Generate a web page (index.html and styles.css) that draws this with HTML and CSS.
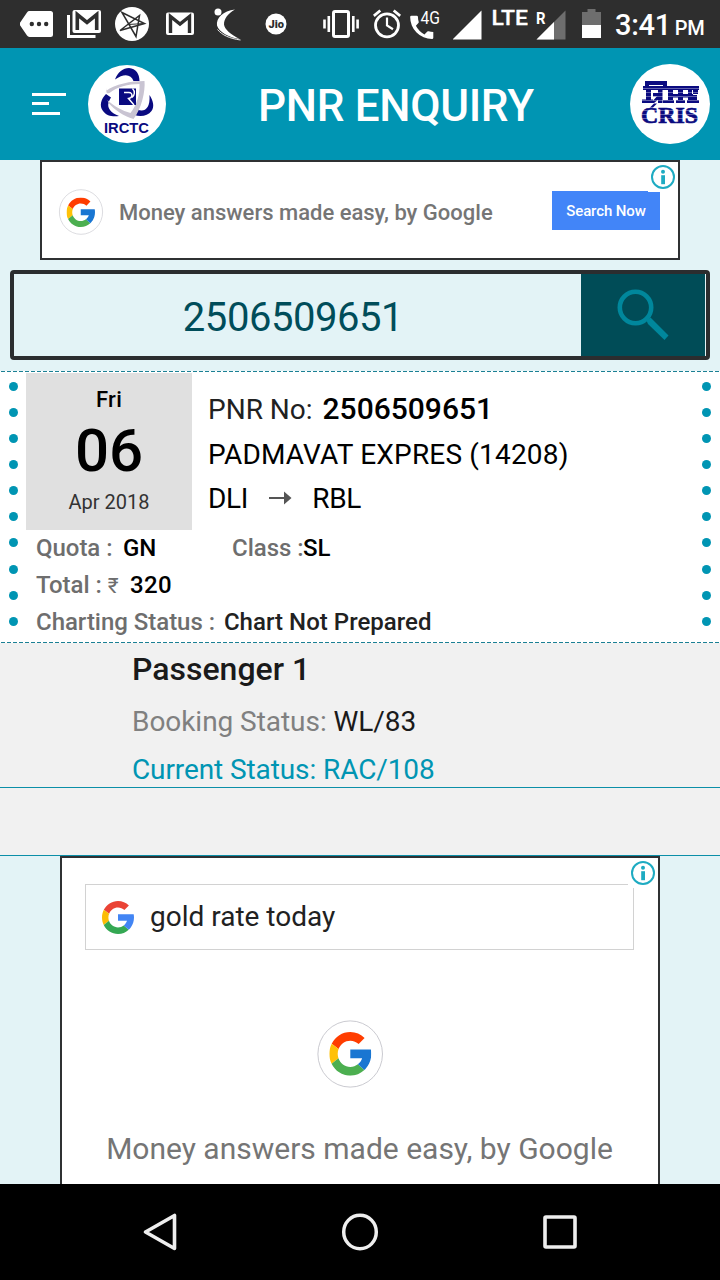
FILE: index.html
```html
<!DOCTYPE html>
<html lang="en">
<head>
<meta charset="utf-8">
<title>PNR Enquiry</title>
<link rel="stylesheet" href="styles.css">
</head>
<body>
<svg width="0" height="0" class="defs" aria-hidden="true">
  <symbol id="info" viewBox="0 0 24 24">
    <circle cx="12" cy="12" r="11" fill="#fff" stroke="#1eabc2" stroke-width="2"/>
    <circle cx="12" cy="6.8" r="2" fill="#1eabc2"/>
    <path d="M10.2 10.2h3.8v9h-3.8z" fill="#1eabc2"/>
  </symbol>
  <symbol id="g" viewBox="4 4 40 40" preserveAspectRatio="none">
    <path class="g-r" d="M6.306 14.691l6.571 4.819C14.655 15.108 18.961 12 24 12c3.059 0 5.842 1.154 7.961 3.039l5.657-5.657C34.046 6.053 29.268 4 24 4 16.318 4 9.656 8.337 6.306 14.691z"/>
    <path class="g-y" d="M6.306 14.691l6.571 4.819C12.3 20.9 12 22.4 12 24c0 1.4.25 2.8.717 4.054l-6.522 5.025C4.8 30.4 4 27.3 4 24c0-3.4.84-6.5 2.306-9.309z"/>
    <path class="g-g" d="M24 44c5.166 0 9.86-1.977 13.409-5.192l-6.19-5.238C29.211 35.091 26.715 36 24 36c-5.202 0-9.619-3.317-11.283-7.946l-6.522 5.025C9.505 39.556 16.227 44 24 44z"/>
    <path class="g-b" d="M43.611 20H24v8h11.303c-.792 2.237-2.231 4.166-4.087 5.571l6.193 5.237C36.971 39.205 44 34 44 24c0-1.341-.138-2.65-.389-4z"/>
  </symbol>
</svg>

<div class="status">
  <svg class="s-more" width="33" height="48" viewBox="20 0 33 48"><path d="M29.500 11H50.500a2.500 2.500 0 0 1 2.500 2.500v21a2.500 2.500 0 0 1-2.500 2.500H29.500a3 3 0 0 1-2.500-1.400L20 25.200v-2.400L27 12.400a3 3 0 0 1 2.500-1.400z" fill="#fff"/><g fill="#2e2e2e"><circle cx="31.800" cy="24" r="2.200"/><circle cx="39" cy="24" r="2.200"/><circle cx="46.200" cy="24" r="2.200"/></g></svg>
  <svg class="s-mails" width="35" height="48" viewBox="67 0 35 48"><rect x="72.500" y="10" width="28.500" height="23" rx="2" fill="#fff"/><path d="M77.300 30V14.500l9.700 8 9.700-8V30" fill="none" stroke="#2e2e2e" stroke-width="3.600"/><path d="M68.500 15v21.500H95.500" fill="none" stroke="#fff" stroke-width="3"/></svg>
  <svg class="s-star" width="34" height="48" viewBox="115 0 34 48"><circle cx="132" cy="24" r="17" fill="#fff"/><path d="M122 12.500L144.500 23.500 120 30.500 139.500 15.500 136 36.500z" fill="none" stroke="#2e2e2e" stroke-width="1.500"/><path d="M144.500 23.500L128 24.500" stroke="#2e2e2e"/></svg>
  <svg class="s-mail" width="28" height="48" viewBox="166 0 28 48"><rect x="166" y="12.500" width="28" height="22.500" rx="2" fill="#fff"/><path d="M170.500 33V16.500l9.500 7.500 9.500-7.500V33" fill="none" stroke="#2e2e2e" stroke-width="3.400"/></svg>
  <svg class="s-swirl" width="28" height="48" viewBox="214 0 28 48"><circle cx="218" cy="12" r="3.500" fill="#fff"/><path d="M235 9.500C223 11 216 18 217 25.500 219 32 229 37.500 239.500 39 231 34.500 224.500 29.500 224 24.500 224 18.500 228 13.500 235 9.500z" fill="#fff"/><path d="M217.500 29.500c4.500 5.500 12 9 23 10.500" fill="none" stroke="#fff" stroke-width=".9"/></svg>
  <svg class="s-jio" width="22" height="48" viewBox="265 0 22 48"><circle cx="276" cy="24" r="10.500" fill="#fff"/><text x="268.500" y="27.500" font-size="10.500" font-weight="900" fill="#2e2e2e" textLength="15.500" lengthAdjust="spacingAndGlyphs">Jio</text></svg>
  <svg class="s-vib" width="37" height="48" viewBox="323 0 37 48"><rect x="333.500" y="11.500" width="15" height="25" rx="1.500" fill="none" stroke="#fff" stroke-width="3"/><path d="M324.500 19.500v9M328.800 16v16M353.300 16v16M357.600 19.500v9" stroke="#fff" stroke-width="2.600"/></svg>
  <svg class="s-alarm" width="28" height="48" viewBox="373 0 28 48"><circle cx="387" cy="25.300" r="11.500" fill="none" stroke="#fff" stroke-width="2.800"/><path d="M387 17.500v8l6 3.700" fill="none" stroke="#fff" stroke-width="2.200"/><path d="M373.800 15.800l6.500-5.300M400.200 15.800l-6.500-5.300" stroke="#fff" stroke-width="2.800"/></svg>
  <svg class="s-call" width="31" height="48" viewBox="410 0 31 48"><path transform="translate(407.300 11.800) scale(1.300)" d="M6.620 10.790a15 15 0 0 0 6.590 6.590l2.200-2.200a1 1 0 0 1 1.020-.24c1.100.37 2.300.57 3.570.57v0V20a1 1 0 0 1-1 1A17 17 0 0 1 2.200 4a1 1 0 0 1 1-1H7.200a1 1 0 0 1 1 1c0 1.250.2 2.450.57 3.570a1 1 0 0 1-.25 1.020z" fill="#fff"/><text x="420.500" y="24" font-size="17.500" fill="#fff" textLength="19.500" lengthAdjust="spacingAndGlyphs">4G</text></svg>
  <svg class="s-sig" width="29" height="48" viewBox="453 0 29 48"><path d="M452.500 39.500H481.500V10.500z" fill="#fff"/></svg>
  <svg class="s-lte" width="36" height="48" viewBox="492 0 36 48"><text x="491.500" y="25" font-size="21" font-weight="500" fill="#fff" stroke="#fff" stroke-width=".3" textLength="36.500" lengthAdjust="spacingAndGlyphs">LTE</text></svg>
  <svg class="s-sig2" width="30" height="48" viewBox="536 0 30 48"><path d="M536.500 39.500H565.500V10.500z" fill="#6e6e6e"/><path d="M536.500 39.500H554V22z" fill="#fff"/><text x="536" y="23.500" font-size="16" font-weight="700" fill="#fff" textLength="9.500" lengthAdjust="spacingAndGlyphs">R</text></svg>
  <svg class="s-bat" width="20" height="48" viewBox="582 0 20 48"><path d="M582 12h5.500V9h8v3H601v14h-19z" fill="#6e6e6e"/><path d="M582 25h19v13h-19z" fill="#fff"/></svg>
  <div class="clock">3:41 <span class="pm">PM</span></div>
</div>

<header class="bar">
  <svg class="menu" width="36" height="24" viewBox="0 0 36 24"><path d="M0 2.500h34M0 11.500h17M0 21.500h28" stroke="#fff" stroke-width="3"/></svg>
  <svg class="irctc" width="78" height="78" viewBox="88 65 78 78">
    <circle cx="127" cy="104" r="39" fill="#fff"/>
    <g fill="#0a0a80"><path d="M115 79.500C118 72 123 68 129 68c7 .5 10.500 6 10.500 13h-6C131 74 124 73 115 79.500z"/><path d="M106 94c-5 5-7 12-3 17 3.500 5 10 6 16 5-8-3-12-8-10.500-13 .5-2 1.500-4 2.500-5.500z"/><path d="M149.500 95c4 6 5 12 2 16-3.500 5-11 6-17 4l3-5.500c6 2.500 13 .5 12-14.500z"/></g>
    <path d="M106 91c9-7 25-10 38.500-10 1 10-3 28-11 38-10-3-19-9-25-16l-1-3c6 6 15 11 23 13 6-8 9.500-18 9-29-11 0-23 3-30 9-3 1-3 0-3.500-5z" fill="#c9c4d2"/>
    <rect x="119" y="88.500" width="17" height="16.500" fill="#0a0a80"/><path d="M124 92.500h5c4 0 4 5.500-.5 6l5.500 6.500M132.500 88.500c3 3 2 7-.5 9" fill="none" stroke="#fff" stroke-width="1.400"/>
    <text x="104" y="133" class="arial" font-size="14.500" font-weight="700" fill="#0a0a80" textLength="45" lengthAdjust="spacingAndGlyphs">IRCTC</text>
  </svg>
  <h1>PNR ENQUIRY</h1>
  <svg class="cris" width="80" height="80" viewBox="630 64 80 80">
    <circle cx="670" cy="104" r="40" fill="#fff"/>
    <g fill="#0a0a80"><path d="M645 81h22v6h-4v-2h-14v2h-4z"/><path d="M643 86h56v4h-56z"/><path d="M646 89h5v13h-5zM653 93h9v3.500h-9zM658 89h4.500v14H658zM668 89h5v14h-5zM672 94h8v3.500h-8zM678 89h5v14h-5zM682 94h8v3.500h-8zM688 89h5v14h-5zM692 94h6v-4h-6zM692 95h5v8h-5z"/><path d="M642 99.500h11v3.500h-11zM663 100h11v3h-11zM676 100h9v3h-9zM687 100h12v3h-12z"/><path d="M651 103l8-9v5l-5 4zM650 107.500l4-4h3l-4 4z"/></g>
    <text x="641" y="123" class="serif" font-size="23" font-weight="700" fill="#0a0a80" stroke="#0a0a80" stroke-width=".7" textLength="57" lengthAdjust="spacingAndGlyphs">CRIS</text>
    <path d="M640 88.500h60M640 92.500h60M640 96.500h60M640 100.500h60M640 110.500h60M640 114.500h60M640 118.500h60" stroke="#fff" stroke-width=".7" opacity=".5"/>
  </svg>
</header>

<main class="content">
  <section class="ad-top">
    <svg class="g-pale" width="46" height="46" viewBox="58 189.500 46 46"><ellipse cx="81" cy="212.500" rx="21.600" ry="22.300" fill="#fff" stroke="#d3d3d8" stroke-width=".8"/><use href="#g" x="66.500" y="198" width="28.500" height="29.500"/></svg>
    <p class="ad-text">Money answers made easy, by Google</p>
    <a class="cta">Search Now</a>
    <div class="info-btn"><svg width="24" height="24"><use href="#info"/></svg></div>
  </section>

  <section class="search">
    <div class="pnr-input">2506509651</div>
    <div class="go"><svg width="126" height="82" viewBox="581 274 126 82"><circle cx="635.500" cy="307.500" r="15.700" fill="none" stroke="#00879c" stroke-width="4.600"/><path d="M646.500 320.500l4-3L668.500 335.500l-4 4.500L648 324z" fill="#00879c"/></svg></div>
  </section>

  <section class="ticket">
    <svg class="dash" width="720" height="1"><path d="M1 .5H720" stroke="#1b8094" stroke-dasharray="4 2"/></svg>
    <div class="ticket-body">
      <div class="dots"><i></i><i></i><i></i><i></i><i></i><i></i><i></i><i></i><i></i><i></i></div>
      <div class="info">
        <div class="top">
          <div class="date"><div class="day">Fri</div><div class="num">06</div><div class="mon">Apr 2018</div></div>
          <div class="train">
            <div class="line">PNR No: <b>2506509651</b></div>
            <div class="line l2">PADMAVAT EXPRES (14208)</div>
            <div class="line l3">DLI <svg class="arrow" width="23" height="14" viewBox="0 0 23 14"><path d="M0 7h16" stroke="#555" stroke-width="2"/><path d="M15 .500l7.500 6.500L15 13.500z" fill="#555"/></svg> RBL</div>
          </div>
        </div>
        <div class="row"><span class="quota">Quota : <b>GN</b></span><span>Class :<b class="tight">SL</b></span></div>
        <div class="row"><span>Total : <span class="rs">₹</span><b class="fare">320</b></span></div>
        <div class="row"><span>Charting Status : <b class="chart">Chart Not Prepared</b></span></div>
      </div>
      <div class="dots right"><i></i><i></i><i></i><i></i><i></i><i></i><i></i><i></i><i></i><i></i></div>
    </div>
    <svg class="dash" width="720" height="1"><path d="M1 .5H720" stroke="#1b8094" stroke-dasharray="4 2"/></svg>
  </section>

  <section class="passenger">
    <div class="p-name">Passenger 1</div>
    <div class="p-book">Booking Status: <span>WL/83</span></div>
    <div class="p-cur">Current Status: RAC/108</div>
  </section>
  <div class="blank"></div>

  <section class="ad-big">
    <div class="query">
      <svg class="g-bright" width="32" height="33"><use href="#g" width="32" height="33"/></svg>
      <span>gold rate today</span>
    </div>
    <svg class="g-pale mark" width="68" height="70" viewBox="316 1019 68 70"><ellipse cx="350.200" cy="1054" rx="32.300" ry="33.100" fill="#fff" stroke="#bdbdc4" stroke-width=".8"/><use href="#g" x="329.300" y="1032" width="42" height="43.700"/></svg>
    <p class="big-text">Money answers made easy, by Google</p>
    <div class="info-btn"><svg width="24" height="24"><use href="#info"/></svg></div>
  </section>
</main>

<nav class="nav">
  <svg width="40" height="40" viewBox="140 1212 40 40"><path d="M145.500 1232L174.500 1215.500V1248.500z" fill="none" stroke="#eee" stroke-width="3.600" stroke-linejoin="round"/></svg>
  <svg width="40" height="40" viewBox="331.500 1212 40 40"><ellipse cx="351.500" cy="1232" rx="16.300" ry="16.800" fill="none" stroke="#eee" stroke-width="3.500"/></svg>
  <svg width="40" height="40" viewBox="525 1212 40 40"><rect x="530" y="1217" width="30" height="30" rx="1" fill="none" stroke="#eee" stroke-width="3.600"/></svg>
</nav>
</body>
</html>
```

FILE: styles.css
```css
* { box-sizing: border-box; }
body {
  margin: 0;
  width: 720px;
  height: 1280px;
  overflow: hidden;
  display: flex;
  flex-direction: column;
  font-family: Roboto, sans-serif;
  background: #e3f3f6;
  color: #000;
}
h1, p { margin: 0; }
svg { display: block; flex: none; }
text { font-family: Roboto, sans-serif; }
text.arial { font-family: "Liberation Sans", sans-serif; }
text.serif { font-family: "Liberation Serif", serif; }
.defs { position: absolute; }

.status { height: 48px; display: flex; background: #2e2e2e; flex: none; }
.s-more { margin-left: 20px; }
.s-mails { margin-left: 14px; }
.s-star { margin-left: 13px; }
.s-mail { margin-left: 17px; }
.s-swirl { margin-left: 20px; }
.s-jio { margin-left: 23px; }
.s-vib { margin-left: 36px; }
.s-alarm { margin-left: 13px; }
.s-call { margin-left: 9px; }
.s-sig { margin-left: 12px; }
.s-lte { margin-left: 10px; }
.s-sig2 { margin-left: 8px; }
.s-bat { margin-left: 16px; }
.clock { margin-left: 13px; font-size: 29px; font-weight: 500; line-height: 50px; letter-spacing: -.3px; color: #fff; white-space: nowrap; }
.pm { font-size: 20px; margin-left: -3px; }

.bar { height: 112px; flex: none; display: flex; align-items: center; background: #0095b3; padding-left: 32px; padding-right: 10px; }
.irctc { margin-left: 20px; }
.bar h1 { flex: 1; font-size: 44px; font-weight: 500; line-height: 52px; letter-spacing: -.3px; padding: 4px 0 0 92px; color: #fff; white-space: nowrap; }

.content { flex: 1; min-height: 0; overflow: hidden; }
.ad-top { position: relative; width: 640px; height: 100px; margin: 0 auto; display: flex; align-items: center; padding: 4px 18px 0 16px; border: 2px solid #2f3133; background: #fff; }
.ad-text { margin: 2px 0 0 15px; font-size: 22px; font-weight: 500; line-height: 26px; color: #757575; white-space: nowrap; }
.cta { margin-left: auto; width: 108px; height: 39px; margin-top: -3px; background: #4285f8; color: #fff; font-size: 15px; font-weight: 500; line-height: 40px; letter-spacing: -.1px; text-align: center; }
.info-btn { position: absolute; top: 0; right: 0; width: 30px; height: 30px; padding: 3px; background: #fff; }

.search { display: flex; margin: 10px 10px 0; height: 90px; border: 4px solid #2b2d2f; border-radius: 4px; background: #e3f3f6; }
.pnr-input { width: 567px; padding-right: 9px; text-align: center; font-size: 40px; line-height: 87px; letter-spacing: -.45px; color: #004d5a; }
.go { width: 124px; background: #004c57; overflow: hidden; }

.ticket { margin-top: 11px; background: #fff; }
.ticket-body { display: flex; height: 270px; }
.dots { width: 26px; flex: none; display: flex; flex-direction: column; justify-content: space-between; align-items: center; padding: 9.500px 0 16px; }
.dots i { width: 9px; height: 9px; border-radius: 50%; background: #0095b3; }
.dots.right { width: 28px; }
.info { flex: 1; padding-top: 1px; }
.top { display: flex; height: 156.500px; }
.date { width: 166px; height: 157px; background: #e0e0e0; text-align: center; }
.day { font-size: 22px; font-weight: 500; line-height: 53px; letter-spacing: .3px; }
.num { font-size: 60px; font-weight: 500; line-height: 49px; }
.mon { font-size: 20px; line-height: 54px; color: #333; }
.train { padding: 14px 0 0 16px; }
.line { font-size: 28px; line-height: 45px; white-space: nowrap; display: flex; align-items: center; }
.line b { font-weight: 500; font-size: 30px; line-height: 43px; padding-bottom: 2px; margin-left: 10px; }
.line:first-child { color: #212121; }
.line:first-child b { color: #000; }
.l2 { letter-spacing: .18px; }
.l3 { line-height: 44px; letter-spacing: -.3px; }
.arrow { margin: -2px 20px 0 21px; }
.row { display: flex; padding-left: 10px; height: 37px; line-height: 37px; font-size: 24px; font-weight: 500; letter-spacing: -.03px; color: #6e6e6e; white-space: nowrap; }
.row b { font-weight: 500; color: #000; margin-left: 4.500px; }
.row b.tight { margin-left: -.5px; }
.row b.chart { color: #212121; margin-left: 3px; letter-spacing: .03px; }
.row b.fare { margin-left: 11.500px; letter-spacing: .3px; }
.rs { font-weight: 400; font-size: 21px; }
.quota { width: 196px; }

.passenger { height: 145px; padding-left: 132px; background: #f1f1f1; border-bottom: 1px solid #0b8fa8; white-space: nowrap; }
.p-name { font-size: 32px; font-weight: 500; line-height: 53px; color: #1a1a1a; }
.p-book { font-size: 28px; line-height: 51px; letter-spacing: -.05px; color: #808080; }
.p-book span { color: #1a1a1a; }
.p-cur { font-size: 28px; line-height: 46px; letter-spacing: -.1px; color: #0095b3; }
.blank { height: 68px; background: #f1f1f1; border-bottom: 1px solid #0b8fa8; }

.ad-big { position: relative; width: 600px; height: 400px; margin: 0 auto; padding: 26px 24px 0 23px; border: 2px solid #2f3133; background: #fff; display: flex; flex-direction: column; }
.query { display: flex; align-items: center; width: 549px; height: 66px; padding-left: 16px; border: 1px solid #d2d2d2; font-size: 28px; color: #212121; white-space: nowrap; }
.query span { margin-left: 16px; padding-bottom: 2px; }
.mark { margin: 69px 0 0 231px; }
.big-text { margin-top: 40px; font-size: 30px; line-height: 40px; color: #757575; text-align: center; white-space: nowrap; }
.g-pale { --r: #ff3d00; --y: #ffc107; --g: #4caf50; --b: #1976d2; }
.g-bright { --r: #ea4335; --y: #fbbc05; --g: #34a853; --b: #4285f4; }
.g-r { fill: var(--r); }
.g-y { fill: var(--y); }
.g-g { fill: var(--g); }
.g-b { fill: var(--b); }

.nav { height: 96px; flex: none; display: flex; align-items: center; justify-content: space-between; padding: 0 140px; background: #000; }
```
